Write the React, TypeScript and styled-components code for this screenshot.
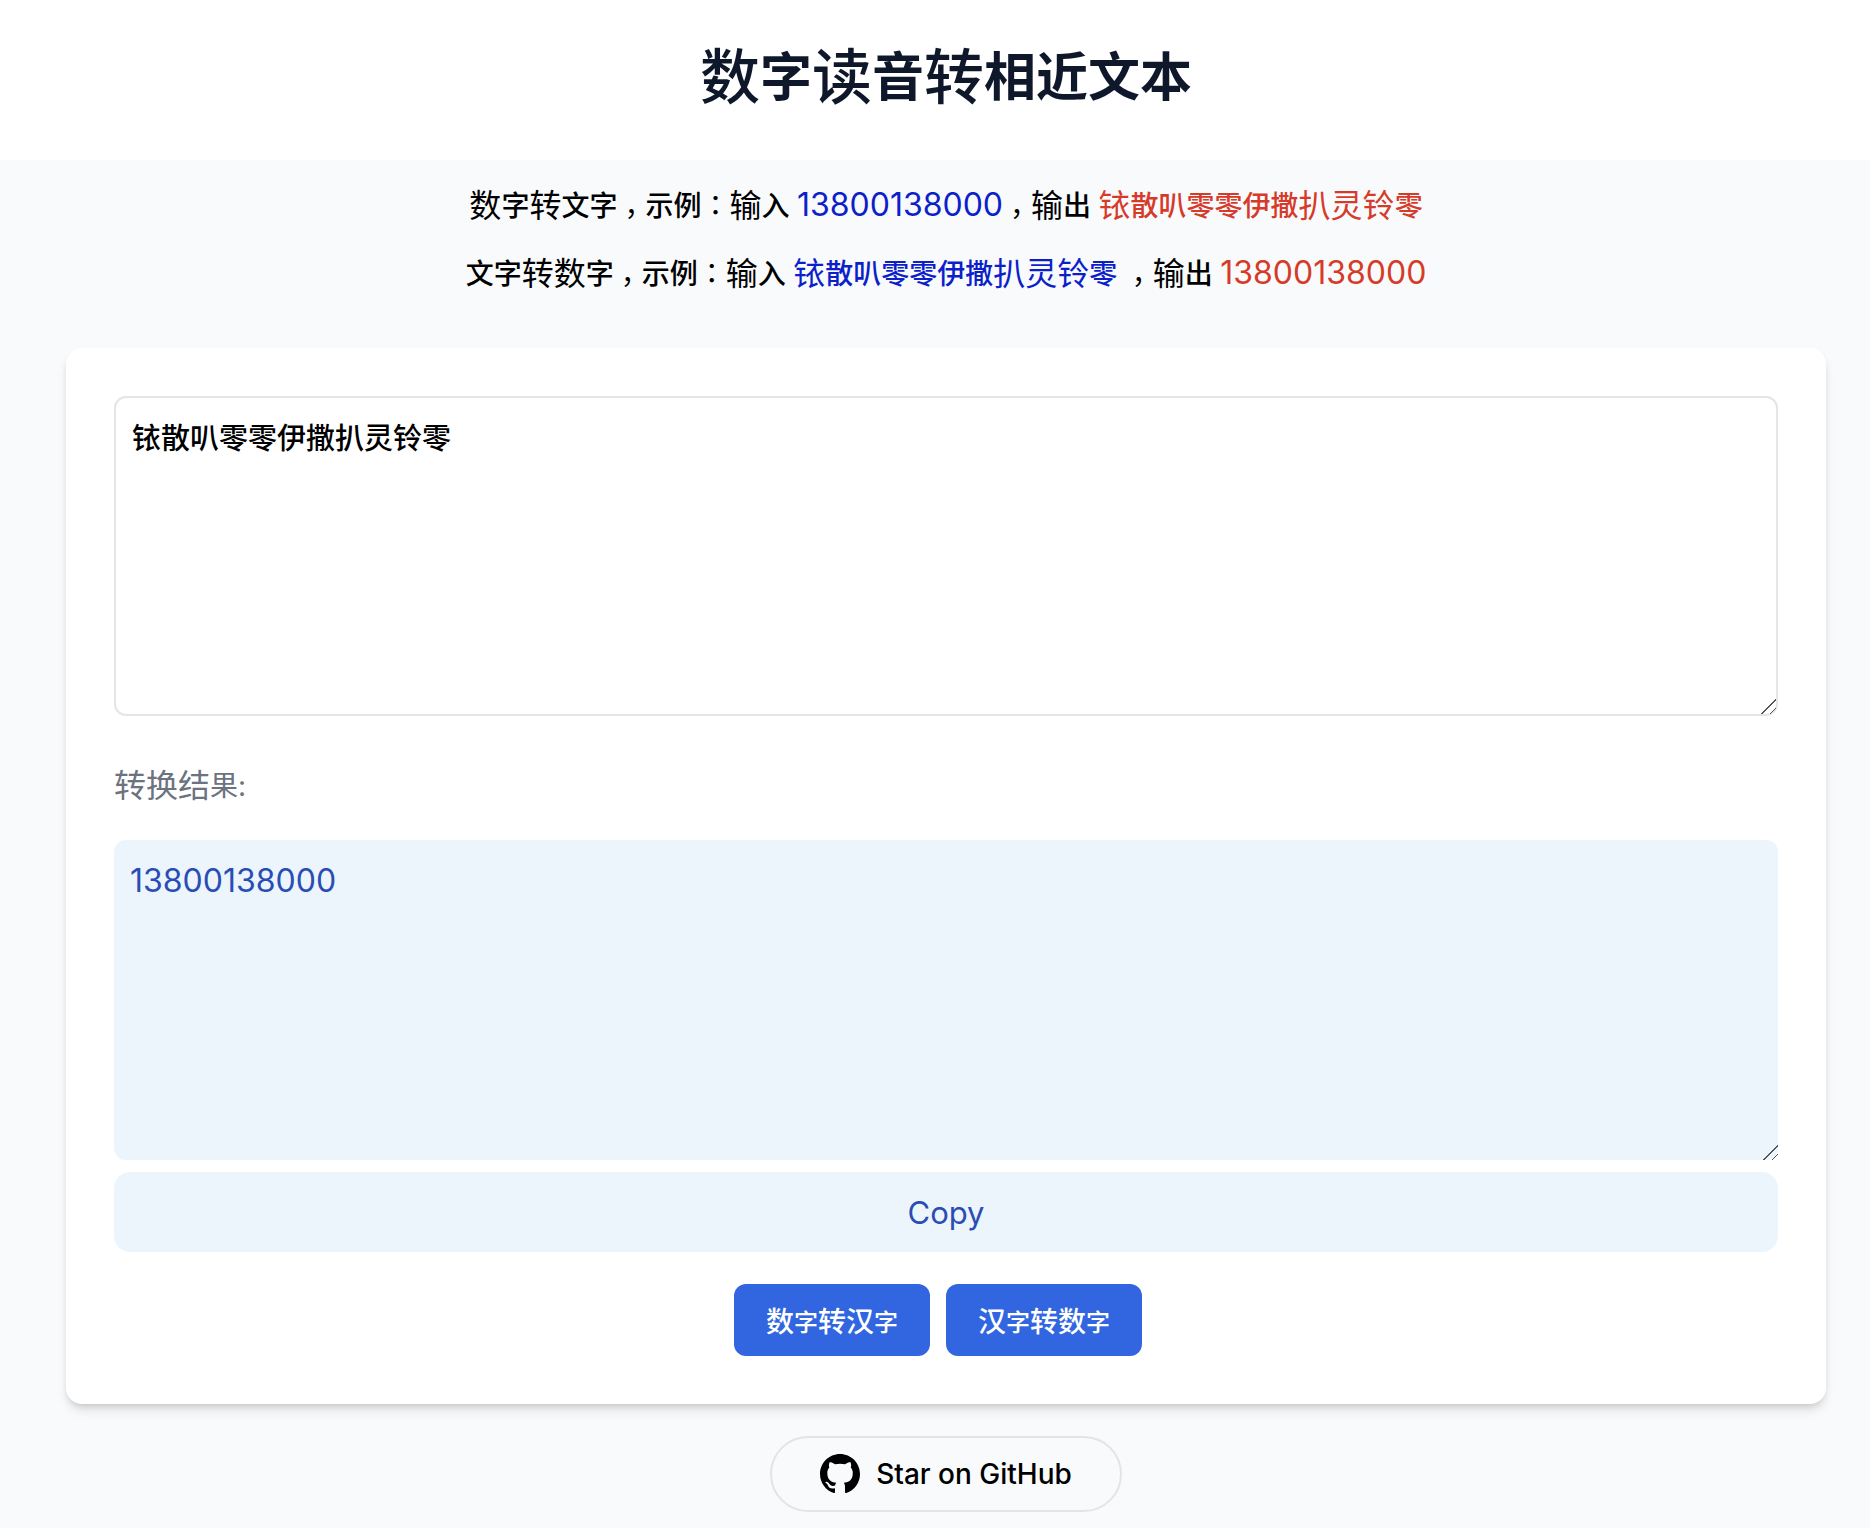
import React, { useState } from "react";
import styled, { createGlobalStyle } from "styled-components";

const GlobalStyle = createGlobalStyle`
  *, *::before, *::after { box-sizing: border-box; }
  html { background: #f8fafc; }
  body {
    margin: 0;
    color: #000;
    font-family: Inter, "Noto Sans CJK SC", sans-serif;
  }
  button, textarea { font-family: inherit; }
`;

const Wide = styled.span<{ $size: number }>`
  font-size: ${(p) => p.$size}px;
  font-weight: 400;
  line-height: 1;
  vertical-align: -1px;
`;

const Header = styled.header`
  display: flex;
  align-items: center;
  justify-content: center;
  height: 160px;
  padding: 0 44px 4px 66px;
  background: #fff;
`;

const Title = styled.h1`
  margin: 0;
  font-size: 52px;
  line-height: 72px;
  font-weight: 700;
  color: #0f172a;

  ${Wide} {
    font-weight: 500;
    vertical-align: -3px;
  }
`;

const Main = styled.main`
  display: flex;
  flex-direction: column;
  align-items: center;
  padding: 12px 44px 16px 66px;
`;

const Intro = styled.section`
  margin-bottom: 40px;
  text-align: center;
`;

const Example = styled.p`
  margin: 0;
  font-size: 28px;
  font-weight: 500;
  line-height: 68px;
`;

const Comma = styled.span`
  display: inline-block;
  width: 28px;
  font-weight: 400;
  line-height: 1;
  text-align: center;
  font-feature-settings: "halt";
`;

const Colon = styled.span`
  font-family: "Noto Sans CJK JP", sans-serif;
  font-weight: 400;
  line-height: 1;
`;

const Sample = styled.span<{ $tone: "input" | "output" }>`
  color: ${(p) => (p.$tone === "input" ? "#0d1fc9" : "#d63b2a")};
`;

const Digits = styled.span`
  font-size: 32px;
  font-weight: 400;
  line-height: 1;
`;

const Card = styled.section`
  display: flex;
  flex-direction: column;
  align-self: stretch;
  padding: 48px;
  border-radius: 16px;
  background: #fff;
  box-shadow: 0 8px 12px -2px rgba(0, 0, 0, 0.1), 0 4px 8px -4px rgba(0, 0, 0, 0.2);
`;

const Field = styled.textarea`
  display: block;
  width: 100%;
  height: 320px;
  padding: 16px;
  border: 2px solid #e5e5e5;
  border-radius: 12px;
  outline: none;
  background: #fff;
  color: #000;
  font-size: 29px;
  font-weight: 500;
  line-height: 50px;
  resize: vertical;

  &::-webkit-scrollbar {
    width: 18px;
    height: 18px;
  }

  &::-webkit-resizer {
    background: linear-gradient(
        135deg,
        transparent 0 46%,
        #555 46% 52%,
        transparent 52% 72%,
        #555 72% 78%,
        transparent 78%
      )
      0 0 / 16px 16px no-repeat;
  }
`;

const ResultField = styled(Field)`
  border: 0;
  background: #ecf5fc;
  color: #2a4db5;
  font-size: 32px;
  font-weight: 400;
`;

const ResultLabel = styled.label`
  padding: 46px 0 30px;
  color: #6b7280;
  font-size: 28px;
  line-height: 48px;
`;

const CopyButton = styled.button`
  height: 80px;
  margin-top: 12px;
  border: 0;
  border-radius: 16px;
  background: #ecf5fc;
  color: #2a4db5;
  font-size: 31px;
  cursor: pointer;
`;

const Actions = styled.div`
  display: flex;
  justify-content: center;
  margin-top: 32px;
`;

const ActionButton = styled.button`
  height: 72px;
  margin-right: 16px;
  padding: 0 32px;
  border: 0;
  border-radius: 12px;
  background: #3166e0;
  color: #fff;
  font-size: 24px;
  font-weight: 500;
  cursor: pointer;

  ${Wide} {
    font-weight: 500;
  }
`;

const GithubLink = styled.a`
  display: flex;
  align-items: center;
  gap: 16px;
  height: 76px;
  margin-top: 32px;
  padding: 0 48px;
  border: 2px solid #e2e4e8;
  border-radius: 38px;
  color: #000;
  font-size: 28px;
  font-weight: 500;
  text-decoration: none;
`;

const WIDE_GLYPHS = /([数转读输铱扒灵铃换结汉])/;

function Mixed({ text, size }: { text: string; size: number }) {
  return (
    <>
      {text.split(WIDE_GLYPHS).map((part, i) =>
        i % 2 ? (
          <Wide key={i} $size={size}>
            {part}
          </Wide>
        ) : (
          part
        )
      )}
    </>
  );
}

function Octocat() {
  return (
    <svg width="40" height="40" viewBox="0 0 16 16" fill="currentColor" aria-hidden="true">
      <path d="M8 0C3.58 0 0 3.58 0 8c0 3.54 2.29 6.53 5.47 7.59.4.07.55-.17.55-.38 0-.19-.01-.82-.01-1.49-2.01.37-2.53-.49-2.69-.94-.09-.23-.48-.94-.82-1.13-.28-.15-.68-.52-.01-.53.63-.01 1.08.58 1.23.82.72 1.21 1.87.87 2.33.66.07-.52.28-.87.51-1.07-1.78-.2-3.64-.89-3.64-3.95 0-.87.31-1.59.82-2.15-.08-.2-.36-1.02.08-2.12 0 0 .67-.21 2.2.82.64-.18 1.32-.27 2-.27s1.36.09 2 .27c1.53-1.04 2.2-.82 2.2-.82.44 1.1.16 1.92.08 2.12.51.56.82 1.27.82 2.15 0 3.07-1.87 3.75-3.65 3.95.29.25.54.73.54 1.48 0 1.07-.01 1.93-.01 2.2 0 .21.15.46.55.38A8.01 8.01 0 0 0 16 8c0-4.42-3.58-8-8-8z" />
    </svg>
  );
}

const WORDS = "铱散叭零零伊撒扒灵铃零";
const NUMBER = "13800138000";
const COMMA = "\uFF0C";
const COLON = "\uFF1A";

const SOUNDS: Record<string, string> = {
  "0": "零灵铃",
  "1": "伊铱",
  "2": "尔",
  "3": "散撒",
  "4": "思",
  "5": "舞",
  "6": "留",
  "7": "期",
  "8": "叭扒",
  "9": "久",
};

function toWords(value: string) {
  return [...value].map((c) => SOUNDS[c]?.[0] ?? c).join("");
}

function toDigits(value: string) {
  return [...value]
    .map((c) => Object.keys(SOUNDS).find((d) => SOUNDS[d].includes(c)) ?? c)
    .join("");
}

export default function App() {
  const [value, setValue] = useState(WORDS);
  const [result, setResult] = useState(NUMBER);

  return (
    <>
      <GlobalStyle />
      <Header>
        <Title>
          <Mixed text="数字读音转相近文本" size={60} />
        </Title>
      </Header>
      <Main>
        <Intro>
          <Example>
            <Mixed text="数字转文字" size={32} />
            <Comma>{COMMA}</Comma>示例<Colon>{COLON}</Colon>
            <Mixed text="输入" size={32} />{" "}
            <Sample $tone="input">
              <Digits>{NUMBER}</Digits>
            </Sample>
            <Comma>{COMMA}</Comma>
            <Mixed text="输出" size={32} />{" "}
            <Sample $tone="output">
              <Mixed text={WORDS} size={32} />
            </Sample>
          </Example>
          <Example>
            <Mixed text="文字转数字" size={32} />
            <Comma>{COMMA}</Comma>示例<Colon>{COLON}</Colon>
            <Mixed text="输入" size={32} />{" "}
            <Sample $tone="input">
              <Mixed text={WORDS} size={32} />
            </Sample>{" "}
            <Comma>{COMMA}</Comma>
            <Mixed text="输出" size={32} />{" "}
            <Sample $tone="output">
              <Digits>{NUMBER}</Digits>
            </Sample>
          </Example>
        </Intro>
        <Card>
          <Field
            aria-label="输入"
            spellCheck={false}
            value={value}
            onChange={(e) => setValue(e.target.value)}
          />
          <ResultLabel htmlFor="result">
            <Mixed text="转换结果:" size={32} />
          </ResultLabel>
          <ResultField id="result" readOnly value={result} />
          <CopyButton type="button" onClick={() => navigator.clipboard?.writeText(result)}>
            Copy
          </CopyButton>
          <Actions>
            <ActionButton type="button" onClick={() => setResult(toWords(value))}>
              <Mixed text="数字转汉字" size={28} />
            </ActionButton>
            <ActionButton type="button" onClick={() => setResult(toDigits(value))}>
              <Mixed text="汉字转数字" size={28} />
            </ActionButton>
          </Actions>
        </Card>
        <GithubLink href="https://github.com">
          <Octocat />
          Star on GitHub
        </GithubLink>
      </Main>
    </>
  );
}
